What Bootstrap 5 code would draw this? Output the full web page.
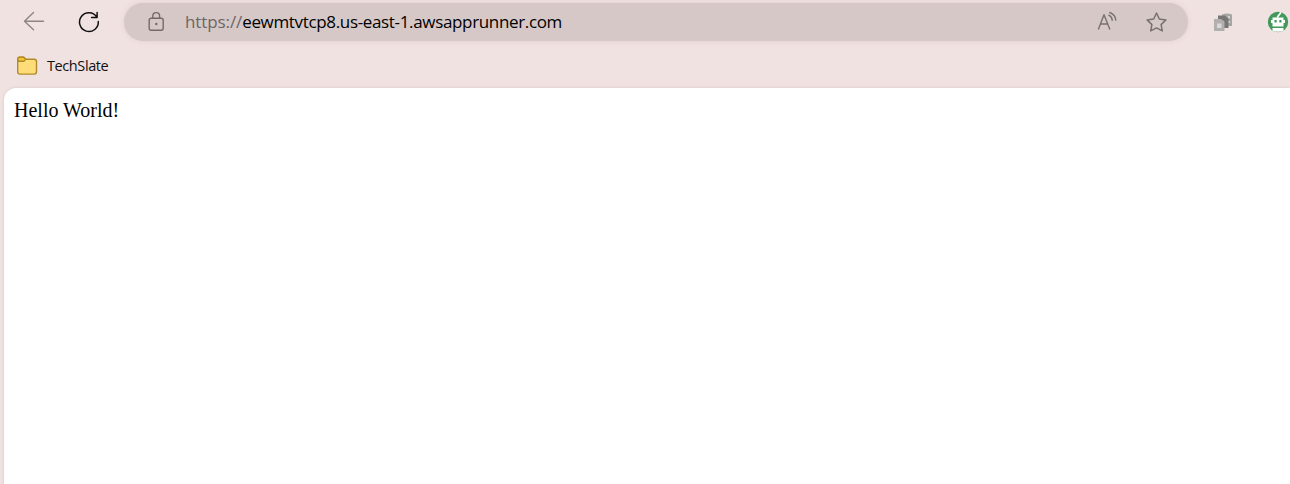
<!DOCTYPE html>
<html lang="en">
<head>
<meta charset="utf-8">
<title>eewmtvtcp8.us-east-1.awsapprunner.com</title>
<link href="https://cdn.jsdelivr.net/npm/bootstrap@5.3.0/dist/css/bootstrap.min.css" rel="stylesheet">
<style>
body{background:#f0e2e1;font-family:"Open Sans","Noto Sans",sans-serif}
svg{display:block;flex:none;fill:none;stroke-linecap:round;stroke-linejoin:round}
.toolbar{height:44px;padding-left:22px}
.reload{margin-left:31px}
.address{width:1064px;height:38px;margin-left:23px;padding:0 20px 0 22px;background:#d6c8c7;box-shadow:0 0 5px #dfcfce}
.url{font-size:17px;line-height:24px;letter-spacing:-.34px;margin-left:19px;color:#000}
.scheme{color:#6c6665;letter-spacing:-.1px}
.extensions{margin-left:26px;gap:33px}
.bookmarks{height:44px;padding-left:16px}
.folder-name{font-size:14.5px;line-height:20px;margin-left:9px;color:#111;letter-spacing:-.4px}
.page{margin-left:4px;padding:10px 10px;border-top-left-radius:12px;box-shadow:0 0 3px #d3c4c3;font-family:"Liberation Serif",serif;font-size:20px;line-height:24px;color:#000}
</style>
</head>
<body class="vh-100 overflow-hidden d-flex flex-column">
<header>
<nav class="toolbar d-flex align-items-center">
<svg width="24" height="24" stroke="#8d8584" stroke-width="1.4"><path d="M21.5 11.2H2.5M11.5 2.5 2.5 11.2l9 8.5"/></svg>
<svg class="reload" width="24" height="24" stroke="#111" stroke-width="1.5"><path d="M19.8 7A9.4 9.4 0 1 0 21.3 11.500M20.100 2.600v4.800h-5.500"/></svg>
<div class="address rounded-pill d-flex align-items-center">
<svg width="20" height="24" stroke="#736b6a" stroke-width="1.4"><rect x="3.2" y="8.2" width="14" height="12" rx="2"/><path d="M6.8 8.2V6a3.4 3.4 0 0 1 6.8 0v2.2"/><circle cx="10.3" cy="14" r="1.2" fill="#736b6a" stroke="none"/></svg>
<span class="url text-nowrap"><span class="scheme">https://</span>eewmtvtcp8.us-east-1.awsapprunner.com</span>
<svg class="ms-auto" width="24" height="24" stroke="#777170" stroke-width="1.4"><path d="m2.5 19 5.5-14.3L13.7 19M4.4 14h7.4M12.8 5.2q3.2 1.4 3.4 5M13.8 2.5q5.6 2.2 6 7.6"/></svg>
<svg class="ms-4" width="24" height="24" stroke="#777170" stroke-width="1.5"><path d="m12.500 3 2.800 6 6.600.9-4.800 4.700 1.200 6.300-5.800-3-5.800 3 1.200-6.300-4.800-4.700 6.600-.9z"/></svg>
</div>
<div class="extensions d-flex align-items-center">
<svg width="20" height="22"><path fill="#a8a6a5" d="M8 3.500q5-2 10 0V15H8z"/><path fill="#d3d2d1" d="M14 5h2v2h-2zM14 10h2v2h-2z"/><path fill="#777675" d="M4 4.500h7l3.500 3.500v9H4z"/><path fill="#b1b0af" d="M0 8h7l3.500 2.500V20H0z"/><path fill="#dad9d8" d="M3 12.500h4.500V17H3z"/></svg>
<svg width="22" height="22"><circle cx="11" cy="11" r="10.2" fill="#43995a"/><path stroke="#fff" stroke-width="1.800" d="m10.500 6 3-4"/><path fill="#fff" d="M5.500 6.500h11v9h-11zM4 9h14v3H4zM5.500 17h11v2.500q-5.500 2.500-11 0z"/><path fill="#43995a" d="M7.500 9h2.200v2.400H7.500zM12.300 9h2.200v2.400h-2.200z"/></svg>
</div>
</nav>
<div class="bookmarks d-flex align-items-center">
<svg width="22" height="22" stroke="#b18b29" stroke-width="1.400"><path fill="#ffdc7a" d="M1.700 4.200q0-2 2-2h4l2.100 2.100h8.500q2.200 0 2.200 2.200v10.300q0 2.300-2.300 2.300H4q-2.300 0-2.300-2.300z"/><path fill="#f5c631" d="M1.700 4.200q0-2 2-2h4l2.100 2.100-2 2H3.500q-1.800 0-1.800-2.100z"/></svg>
<span class="folder-name">TechSlate</span>
</div>
</header>
<main class="page bg-white flex-grow-1">Hello World!</main>
<script src="https://cdn.jsdelivr.net/npm/bootstrap@5.3.0/dist/js/bootstrap.bundle.min.js"></script>
</body>
</html>
